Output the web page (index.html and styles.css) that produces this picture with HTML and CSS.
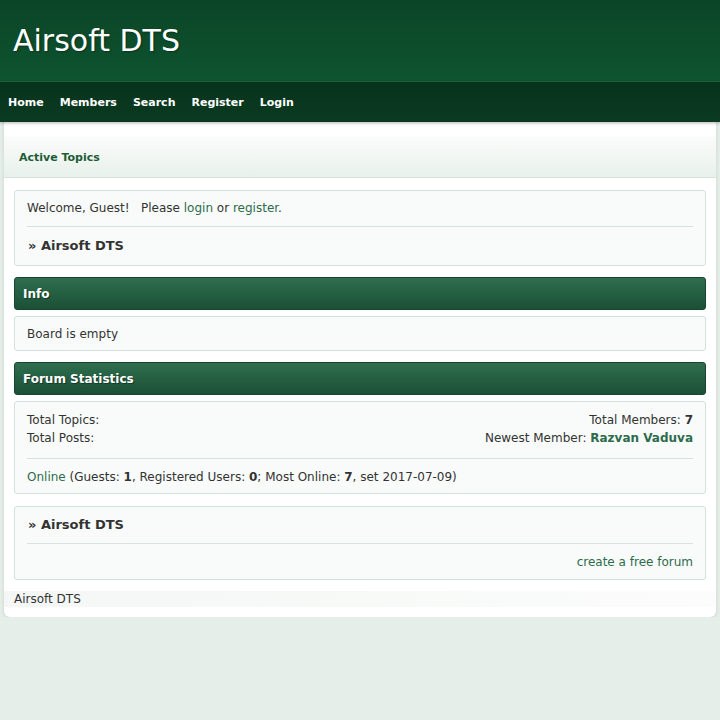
FILE: index.html
```html
<!DOCTYPE html>
<html lang="en">
<head>
    <meta charset="UTF-8">
    <meta name="viewport" content="width=device-width, initial-scale=1.0">
    <title>Airsoft DTS</title>
    <link rel="stylesheet" href="styles.css">
</head>
<body>

<div class="header">
    <h1 class="site-title">Airsoft DTS</h1>
</div>

<ul class="navbar">
    <li><a href="#">Home</a></li>
    <li><a href="#">Members</a></li>
    <li><a href="#">Search</a></li>
    <li><a href="#">Register</a></li>
    <li><a href="#">Login</a></li>
</ul>

<div class="wrapper">
    <div class="subbar">
        <a href="#">Active Topics</a>
    </div>

    <div class="content">
        <div class="panel welcome-panel">
            <p>Welcome, Guest! &nbsp; Please <a href="#">login</a> or <a href="#">register</a>.</p>
            <hr>
            <p class="crumb">&raquo; Airsoft DTS</p>
        </div>

        <h2 class="cat-head">Info</h2>
        <div class="panel">
            <p>Board is empty</p>
        </div>

        <h2 class="cat-head">Forum Statistics</h2>
        <div class="panel">
            <div class="stats">
                <div class="stats-col">
                    <p>Total Topics: </p>
                    <p>Total Posts: </p>
                </div>
                <div class="stats-col right">
                    <p>Total Members: <b>7</b></p>
                    <p>Newest Member: <a class="member" href="#">Razvan Vaduva</a></p>
                </div>
            </div>
            <hr class="wide">
            <p><a href="#">Online</a> (Guests: <b>1</b>, Registered Users: <b>0</b>; Most Online: <b>7</b>, set 2017-07-09)</p>
        </div>

        <div class="panel bottom-panel">
            <p class="crumb">&raquo; Airsoft DTS</p>
            <hr>
            <p class="right"><a href="#">create a free forum</a></p>
        </div>
    </div>

    <div class="footer">Airsoft DTS</div>
</div>

</body>
</html>
```

FILE: styles.css
```css
body {
    font-family: "DejaVu Sans", Verdana, sans-serif;
    font-size: 12px;
    color: #333;
    background-color: #e6eeea;
    margin: 0;
}

a {
    color: #2d6b4d;
    text-decoration: none;
}

p {
    margin: 0;
}

.header {
    height: 81px;
    background: linear-gradient(#0b4527, #0e5430);
    border-bottom: 1px solid #21643f;
}

.site-title {
    margin: 0;
    padding: 23px 0 0 13px;
    font-size: 30px;
    font-weight: normal;
    line-height: 36px;
    color: #fff;
    text-shadow: 1px 1px 2px rgba(0, 0, 0, 0.35);
}

.navbar {
    list-style: none;
    margin: 0;
    padding: 0 0 0 8px;
    height: 40px;
    display: flex;
    align-items: center;
    gap: 16px;
    background: linear-gradient(#07331c, #0a3a21);
    box-shadow: 0 1px 3px rgba(0, 0, 0, 0.3);
    position: relative;
}

.navbar a {
    color: #fff;
    font-size: 11px;
    font-weight: bold;
}

.wrapper {
    margin: 0 4px;
    background: #fff;
    border-radius: 0 0 6px 6px;
    box-shadow: 0 1px 4px rgba(0, 0, 0, 0.12);
    padding: 14px 0 10px;
}

.subbar {
    height: 41px;
    display: flex;
    align-items: center;
    padding-left: 15px;
    background: linear-gradient(#fbfcfb, #e8f1ec);
    border-bottom: 1px solid #d3e3da;
}

.subbar a {
    font-size: 11px;
    font-weight: bold;
    color: #1d5c35;
    position: relative;
    top: 1px;
}

.content {
    padding: 12px 10px 0;
    display: flex;
    flex-direction: column;
    gap: 11px;
}

.panel {
    background: #f8fbf9;
    border: 1px solid #d2e2da;
    border-radius: 3px;
    padding: 8px 12px 7px;
    line-height: 18px;
}

.welcome-panel {
    padding-bottom: 10px;
}

.bottom-panel {
    margin-top: 1px;
    padding-bottom: 8px;
}

.panel hr {
    border: 0;
    border-top: 1px solid #d6e4dc;
    margin: 9px 0;
}

.panel hr.wide {
    margin-top: 11px;
}

.crumb {
    font-size: 13px;
    font-weight: bold;
    padding: 1px 0 0 1px;
}

.cat-head {
    margin: 0 0 -5px;
    height: 31px;
    display: flex;
    align-items: center;
    padding-left: 8px;
    font-size: 12px;
    color: #fff;
    text-shadow: 1px 1px 1px rgba(0, 0, 0, 0.4);
    background: linear-gradient(#2f6e4f, #1b5035);
    border: 1px solid #174530;
    border-radius: 3px;
}

.stats {
    display: flex;
    justify-content: space-between;
    padding-top: 1px;
}

.right {
    text-align: right;
}

.member {
    font-weight: bold;
}

.footer {
    margin: 11px 0 0;
    padding: 0 10px;
    line-height: 16px;
    background: linear-gradient(to right, #f4f7f5, #fbfcfb);
}
```
